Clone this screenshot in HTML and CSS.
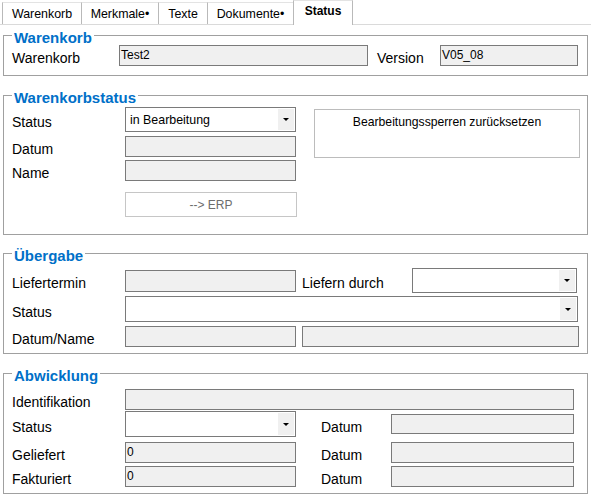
FILE: index.html
```html
<!DOCTYPE html>
<html lang="de">
<head>
  <meta charset="UTF-8" />
  <title>Warenkorb – Status</title>
  <link rel="stylesheet" href="styles.css">
</head>
<body>
  <div class="tabs">
    <div class="tab t1">Warenkorb</div>
    <div class="tab t2">Merkmale•</div>
    <div class="tab t3">Texte</div>
    <div class="tab t4">Dokumente•</div>
    <div class="tab tab-active">Status</div>
  </div>

  <section class="group g1">
    <h2 class="group-title">Warenkorb</h2>
    <div class="rows">
      <div class="row">
        <span class="lbl w107">Warenkorb</span>
        <div class="field w249">Test2</div>
        <span class="lbl ml9 w63">Version</span>
        <div class="field w138">V05_08</div>
      </div>
    </div>
  </section>

  <section class="group g2">
    <h2 class="group-title">Warenkorbstatus</h2>
    <div class="rows split">
      <div class="col">
        <div class="row combo-row">
          <span class="lbl">Status</span>
          <div class="combo w171"><span class="combo-text">in Bearbeitung</span><span class="combo-btn"></span></div>
        </div>
        <div class="row mt4">
          <span class="lbl">Datum</span>
          <div class="field w171"></div>
        </div>
        <div class="row mt3">
          <span class="lbl">Name</span>
          <div class="field w171"></div>
        </div>
        <div class="row mt11">
          <span class="lbl"></span>
          <button class="btn btn-erp" disabled>--&gt; ERP</button>
        </div>
      </div>
      <div class="btn btn-reset">Bearbeitungssperren zurücksetzen</div>
    </div>
  </section>

  <section class="group g3">
    <h2 class="group-title">Übergabe</h2>
    <div class="rows">
      <div class="row combo-row">
        <span class="lbl">Liefertermin</span>
        <div class="field w171 h22 mid"></div>
        <span class="lbl ml6 w110">Liefern durch</span>
        <div class="combo w165"><span class="combo-text"></span><span class="combo-btn"></span></div>
      </div>
      <div class="row combo-row mt3">
        <span class="lbl">Status</span>
        <div class="combo w453 h26"><span class="combo-text"></span><span class="combo-btn"></span></div>
      </div>
      <div class="row mt4">
        <span class="lbl">Datum/Name</span>
        <div class="field w171"></div>
        <div class="field ml6 w277"></div>
      </div>
    </div>
  </section>

  <section class="group g4">
    <h2 class="group-title">Abwicklung</h2>
    <div class="rows">
      <div class="row">
        <span class="lbl">Identifikation</span>
        <div class="field w449"></div>
      </div>
      <div class="row combo-row mt1">
        <span class="lbl">Status</span>
        <div class="combo w171 h26"><span class="combo-text"></span><span class="combo-btn"></span></div>
        <span class="lbl ml25 w70">Datum</span>
        <div class="field w183 h20 mid"></div>
      </div>
      <div class="row mt5">
        <span class="lbl">Geliefert</span>
        <div class="field w171">0</div>
        <span class="lbl ml25 w70">Datum</span>
        <div class="field w183"></div>
      </div>
      <div class="row mt3">
        <span class="lbl">Fakturiert</span>
        <div class="field w171">0</div>
        <span class="lbl ml25 w70">Datum</span>
        <div class="field w183"></div>
      </div>
    </div>
  </section>
</body>
</html>
```

FILE: styles.css
```css
:root {
  --title: #0070c8;
  --frame: #a0a0a0;
  --edge: #7a7a7a;
  --fill: #f0f0f0;
}
* { box-sizing: border-box; }
body {
  margin: 0;
  background: #fff;
  color: #000;
  font-family: "Liberation Sans", Arial, sans-serif;
}

/* tab strip */
.tabs {
  display: flex;
  align-items: flex-end;
  height: 25px;
  padding-left: 2px;
  border-bottom: 1px solid #dadada;
}
.tab {
  height: 22px;
  border-left: 1px solid #b9b9b9;
  border-top: 1px solid #e3e3e3;
  padding-top: 1px;
  text-align: center;
  font-size: 12.4px;
  line-height: 20px;
}
.t1 { width: 79px; }
.t2 { width: 77px; }
.t3 { width: 49px; }
.t4 { width: 86px; }
.tab-active {
  width: 60px;
  height: 25px;
  margin-bottom: -1px;
  background: #fff;
  border: 1px solid #b9b9b9;
  border-top-color: #e3e3e3;
  border-bottom: none;
  font-weight: bold;
  font-size: 12px;
  line-height: 18px;
}

/* group boxes */
.group {
  margin: 0 3px;
  border: 1px solid var(--frame);
}
.g1 { margin-top: 10px; height: 41px; }
.g2 { margin-top: 19px; height: 140px; }
.g3 { margin-top: 18px; height: 101px; }
.g4 { margin-top: 19px; height: 121px; }

.group-title {
  width: fit-content;
  margin: -7px 0 -10px 8px;
  padding: 0 2px;
  background: #fff;
  color: var(--title);
  font-size: 15px;
  line-height: 17px;
  font-weight: bold;
}

.rows { padding-left: 8px; }
.g1 .rows { padding-top: 9px; }
.g2 .rows { padding-top: 11px; }
.g3 .rows { padding-top: 14px; }
.g4 .rows { padding-top: 15px; }

.split { display: flex; align-items: flex-start; }
.col { display: flex; flex-direction: column; }

.row { display: flex; align-items: flex-end; }
.lbl {
  flex: none;
  width: 113px;
  font-size: 14px;
  line-height: 16px;
}
.combo-row .lbl { margin-bottom: 2px; }

/* inputs */
.field {
  flex: none;
  height: 21px;
  border: 1px solid var(--edge);
  background: var(--fill);
  padding: 2px 0 0 1px;
  font-size: 12px;
  line-height: 15px;
}
.combo {
  flex: none;
  display: flex;
  align-items: center;
  height: 25px;
  border: 1px solid var(--edge);
  background: #fff;
}
.combo-text {
  flex: 1;
  padding: 2px 0 0 4px;
  font-size: 12.4px;
  line-height: 15px;
}
.combo-btn {
  display: flex;
  align-items: center;
  justify-content: center;
  align-self: stretch;
  width: 16px;
  margin: 1px 1px 1px 0;
  background: var(--fill);
}
.combo-btn::after {
  content: "";
  border-left: 3px solid transparent;
  border-right: 3px solid transparent;
  border-top: 3px solid #000;
}

.btn {
  flex: none;
  background: #fff;
  font-family: inherit;
  font-size: 12px;
}
.btn-erp {
  width: 172px;
  height: 25px;
  padding: 0;
  border: 1px solid #c6c6c6;
  color: #6d6d6d;
}
.btn-reset {
  width: 266px;
  height: 49px;
  margin: 2px 0 0 17px;
  padding-top: 5px;
  border: 1px solid #bcbcbc;
  text-align: center;
  font-size: 12.2px;
  line-height: 14px;
}

/* sizes and spacing */
.w63 { width: 63px; }
.w70 { width: 70px; }
.w107 { width: 107px; }
.w110 { width: 110px; }
.w138 { width: 138px; }
.w165 { width: 165px; }
.w171 { width: 171px; }
.w183 { width: 183px; }
.w249 { width: 249px; }
.w277 { width: 277px; }
.w449 { width: 449px; }
.w453 { width: 453px; }
.h20 { height: 20px; }
.h22 { height: 22px; }
.h26 { height: 26px; }
.mid { align-self: center; }
.ml6 { margin-left: 6px; }
.ml9 { margin-left: 9px; }
.ml25 { margin-left: 25px; }
.mt1 { margin-top: 1px; }
.mt3 { margin-top: 3px; }
.mt4 { margin-top: 4px; }
.mt5 { margin-top: 5px; }
.mt11 { margin-top: 11px; }
```
